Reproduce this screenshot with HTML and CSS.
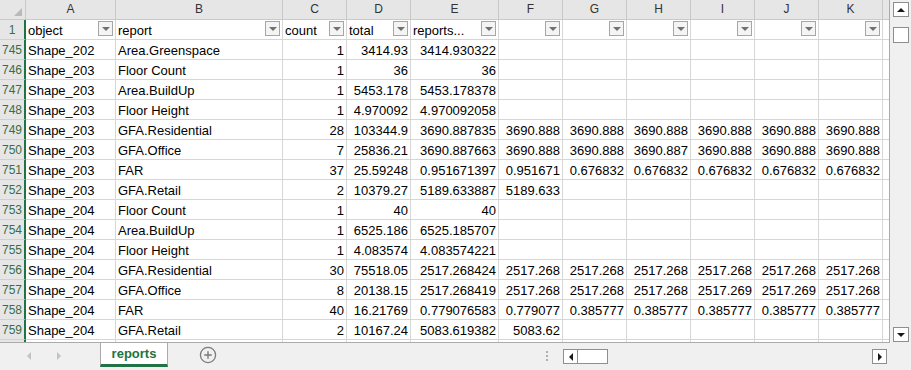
FILE: index.html
```html
<!DOCTYPE html>
<html>
<head>
<meta charset="utf-8">
<link rel="stylesheet" href="styles.css">
</head>
<body>
<div class="app">
  <div class="top">
    <div class="sheet">
      <div class="grid">
        <div class="corner"><span class="tri"></span></div>
        <div class="ch">A</div><div class="ch">B</div><div class="ch">C</div><div class="ch">D</div><div class="ch">E</div><div class="ch">F</div><div class="ch">G</div><div class="ch">H</div><div class="ch">I</div><div class="ch">J</div><div class="ch">K</div><div class="ch">L</div>

        <div class="rh">1</div>
        <div class="c hd"><span class="lbl">object</span><span class="fb"></span></div>
        <div class="c hd"><span class="lbl">report</span><span class="fb"></span></div>
        <div class="c hd"><span class="lbl">count</span><span class="fb"></span></div>
        <div class="c hd"><span class="lbl">total</span><span class="fb"></span></div>
        <div class="c hd"><span class="lbl">reports...</span><span class="fb"></span></div>
        <div class="c hd"><span class="lbl"></span><span class="fb"></span></div>
        <div class="c hd"><span class="lbl"></span><span class="fb"></span></div>
        <div class="c hd"><span class="lbl"></span><span class="fb"></span></div>
        <div class="c hd"><span class="lbl"></span><span class="fb"></span></div>
        <div class="c hd"><span class="lbl"></span><span class="fb"></span></div>
        <div class="c hd"><span class="lbl"></span><span class="fb"></span></div>
        <div class="c"></div>

        <div class="rh">745</div><div class="c">Shape_202</div><div class="c">Area.Greenspace</div><div class="c n">1</div><div class="c n">3414.93</div><div class="c n">3414.930322</div><div class="c n"></div><div class="c n"></div><div class="c n"></div><div class="c n"></div><div class="c n"></div><div class="c n"></div><div class="c"></div>
        <div class="rh">746</div><div class="c">Shape_203</div><div class="c">Floor Count</div><div class="c n">1</div><div class="c n">36</div><div class="c n">36</div><div class="c n"></div><div class="c n"></div><div class="c n"></div><div class="c n"></div><div class="c n"></div><div class="c n"></div><div class="c"></div>
        <div class="rh">747</div><div class="c">Shape_203</div><div class="c">Area.BuildUp</div><div class="c n">1</div><div class="c n">5453.178</div><div class="c n">5453.178378</div><div class="c n"></div><div class="c n"></div><div class="c n"></div><div class="c n"></div><div class="c n"></div><div class="c n"></div><div class="c"></div>
        <div class="rh">748</div><div class="c">Shape_203</div><div class="c">Floor Height</div><div class="c n">1</div><div class="c n">4.970092</div><div class="c n">4.970092058</div><div class="c n"></div><div class="c n"></div><div class="c n"></div><div class="c n"></div><div class="c n"></div><div class="c n"></div><div class="c"></div>
        <div class="rh">749</div><div class="c">Shape_203</div><div class="c">GFA.Residential</div><div class="c n">28</div><div class="c n">103344.9</div><div class="c n">3690.887835</div><div class="c n">3690.888</div><div class="c n">3690.888</div><div class="c n">3690.888</div><div class="c n">3690.888</div><div class="c n">3690.888</div><div class="c n">3690.888</div><div class="c"></div>
        <div class="rh">750</div><div class="c">Shape_203</div><div class="c">GFA.Office</div><div class="c n">7</div><div class="c n">25836.21</div><div class="c n">3690.887663</div><div class="c n">3690.888</div><div class="c n">3690.888</div><div class="c n">3690.887</div><div class="c n">3690.888</div><div class="c n">3690.888</div><div class="c n">3690.888</div><div class="c"></div>
        <div class="rh">751</div><div class="c">Shape_203</div><div class="c">FAR</div><div class="c n">37</div><div class="c n">25.59248</div><div class="c n">0.951671397</div><div class="c n">0.951671</div><div class="c n">0.676832</div><div class="c n">0.676832</div><div class="c n">0.676832</div><div class="c n">0.676832</div><div class="c n">0.676832</div><div class="c"></div>
        <div class="rh">752</div><div class="c">Shape_203</div><div class="c">GFA.Retail</div><div class="c n">2</div><div class="c n">10379.27</div><div class="c n">5189.633887</div><div class="c n">5189.633</div><div class="c n"></div><div class="c n"></div><div class="c n"></div><div class="c n"></div><div class="c n"></div><div class="c"></div>
        <div class="rh">753</div><div class="c">Shape_204</div><div class="c">Floor Count</div><div class="c n">1</div><div class="c n">40</div><div class="c n">40</div><div class="c n"></div><div class="c n"></div><div class="c n"></div><div class="c n"></div><div class="c n"></div><div class="c n"></div><div class="c"></div>
        <div class="rh">754</div><div class="c">Shape_204</div><div class="c">Area.BuildUp</div><div class="c n">1</div><div class="c n">6525.186</div><div class="c n">6525.185707</div><div class="c n"></div><div class="c n"></div><div class="c n"></div><div class="c n"></div><div class="c n"></div><div class="c n"></div><div class="c"></div>
        <div class="rh">755</div><div class="c">Shape_204</div><div class="c">Floor Height</div><div class="c n">1</div><div class="c n">4.083574</div><div class="c n">4.083574221</div><div class="c n"></div><div class="c n"></div><div class="c n"></div><div class="c n"></div><div class="c n"></div><div class="c n"></div><div class="c"></div>
        <div class="rh">756</div><div class="c">Shape_204</div><div class="c">GFA.Residential</div><div class="c n">30</div><div class="c n">75518.05</div><div class="c n">2517.268424</div><div class="c n">2517.268</div><div class="c n">2517.268</div><div class="c n">2517.268</div><div class="c n">2517.268</div><div class="c n">2517.268</div><div class="c n">2517.268</div><div class="c"></div>
        <div class="rh">757</div><div class="c">Shape_204</div><div class="c">GFA.Office</div><div class="c n">8</div><div class="c n">20138.15</div><div class="c n">2517.268419</div><div class="c n">2517.268</div><div class="c n">2517.268</div><div class="c n">2517.268</div><div class="c n">2517.269</div><div class="c n">2517.269</div><div class="c n">2517.268</div><div class="c"></div>
        <div class="rh">758</div><div class="c">Shape_204</div><div class="c">FAR</div><div class="c n">40</div><div class="c n">16.21769</div><div class="c n">0.779076583</div><div class="c n">0.779077</div><div class="c n">0.385777</div><div class="c n">0.385777</div><div class="c n">0.385777</div><div class="c n">0.385777</div><div class="c n">0.385777</div><div class="c"></div>
        <div class="rh">759</div><div class="c">Shape_204</div><div class="c">GFA.Retail</div><div class="c n">2</div><div class="c n">10167.24</div><div class="c n">5083.619382</div><div class="c n">5083.62</div><div class="c n"></div><div class="c n"></div><div class="c n"></div><div class="c n"></div><div class="c n"></div><div class="c"></div>
        <div class="rh">760</div><div class="c"></div><div class="c"></div><div class="c"></div><div class="c"></div><div class="c"></div><div class="c"></div><div class="c"></div><div class="c"></div><div class="c"></div><div class="c"></div><div class="c"></div><div class="c"></div>
      </div>
    </div>
    <div class="vscroll">
      <div class="sbtn"><span class="arr up"></span></div>
      <div class="vthumb"></div>
      <div class="vtrack"></div>
      <div class="sbtn"><span class="arr down"></span></div>
    </div>
  </div>
  <div class="tabbar">
    <div class="nav">
      <span class="navarr left"></span>
      <span class="navarr right"></span>
    </div>
    <div class="tab">reports</div>
    <div class="add">
      <svg width="18" height="18" viewBox="0 0 18 18">
        <circle cx="9" cy="9" r="7.6" fill="none" stroke="#7a7a7a" stroke-width="1.3"/>
        <path d="M9 5.2v7.6M5.2 9h7.6" stroke="#7a7a7a" stroke-width="1.4"/>
      </svg>
    </div>
    <div class="dots"><span></span><span></span><span></span></div>
    <div class="hscroll">
      <div class="sbtn h"><span class="arr left"></span></div>
      <div class="hthumb"></div>
      <div class="htrack"></div>
      <div class="sbtn h"><span class="arr right"></span></div>
    </div>
  </div>
</div>
</body>
</html>
```

FILE: styles.css
```css
* { box-sizing: border-box; }
html, body { margin: 0; padding: 0; }
body {
  width: 911px;
  height: 370px;
  overflow: hidden;
  background: #f0f0f0;
  font-family: "Liberation Sans", Arial, sans-serif;
}
.app { display: flex; flex-direction: column; width: 911px; height: 370px; }
.top { display: flex; height: 343px; }
.sheet {
  width: 889px;
  height: 343px;
  overflow: hidden;
  border-bottom: 1px solid #ababab;
  background: #fff;
}
.grid {
  display: grid;
  grid-template-columns: 26px 90px 167px 64px 64px 88px 64px 64px 64px 64px 64px 64px 64px;
  grid-auto-rows: 20px;
  width: max-content;
}
.corner {
  position: relative;
  background: #e6e6e6;
  border-right: 1px solid #c9c9c9;
  border-bottom: 1px solid #c9c9c9;
}
.corner .tri {
  position: absolute;
  right: 3px;
  bottom: 3px;
  width: 0; height: 0;
  border-left: 8px solid transparent;
  border-bottom: 8px solid #b9b9b9;
}
.ch {
  background: #e6e6e6;
  border-right: 1px solid #c9c9c9;
  border-bottom: 1px solid #c9c9c9;
  text-align: center;
  font-size: 12px;
  line-height: 19px;
  color: #333;
}
.rh {
  background: #e6e6e6;
  border-right: 2px solid #217346;
  border-bottom: 1px solid #d0d0d0;
  text-align: center;
  font-size: 12px;
  line-height: 20px;
  color: #3a6e46;
  overflow: hidden;
}
.c {
  border-right: 1px solid #d6d6d6;
  border-bottom: 1px solid #d6d6d6;
  font-size: 13px;
  line-height: 21px;
  padding-left: 2px;
  color: #000;
  white-space: nowrap;
  overflow: hidden;
}
.c.n { text-align: right; padding-left: 0; padding-right: 2px; }
.c.hd {
  display: flex;
  align-items: flex-start;
  padding-right: 2px;
}
.c.hd .lbl { flex: 1; overflow: hidden; }
.fb {
  flex: none;
  width: 15px;
  height: 15px;
  margin-top: 1px;
  border: 1px solid #a6a6a6;
  background: #f4f4f4;
  display: flex;
  align-items: center;
  justify-content: center;
}
.fb::after {
  content: "";
  width: 0; height: 0;
  border-left: 4px solid transparent;
  border-right: 4px solid transparent;
  border-top: 4px solid #707070;
}
.vscroll {
  width: 22px;
  height: 343px;
  border-left: 1px solid #ababab;
  background: #f0f0f0;
  display: flex;
  flex-direction: column;
  padding: 2px 2px 1px 3px;
}
.sbtn {
  width: 16px;
  height: 15px;
  flex: none;
  background: #fff;
  border: 1px solid #8e8e8e;
  display: flex;
  align-items: center;
  justify-content: center;
}
.vthumb {
  width: 16px;
  height: 16px;
  margin-top: 10px;
  flex: none;
  background: #fff;
  border: 1px solid #8e8e8e;
}
.vtrack { flex: 1; }
.arr { width: 0; height: 0; }
.arr.up { border-left: 4px solid transparent; border-right: 4px solid transparent; border-bottom: 4px solid #1a1a1a; }
.arr.down { border-left: 4px solid transparent; border-right: 4px solid transparent; border-top: 4px solid #1a1a1a; }
.arr.left { border-top: 4px solid transparent; border-bottom: 4px solid transparent; border-right: 4px solid #1a1a1a; }
.arr.right { border-top: 4px solid transparent; border-bottom: 4px solid transparent; border-left: 4px solid #1a1a1a; }
.tabbar {
  display: flex;
  height: 27px;
  background: #f0f0f0;
}
.nav {
  width: 100px;
  display: flex;
  align-items: center;
  padding-left: 27px;
  padding-bottom: 2px;
}
.navarr { width: 0; height: 0; }
.navarr.left { border-top: 4px solid transparent; border-bottom: 4px solid transparent; border-right: 4px solid #c3c3c3; }
.navarr.right { margin-left: 26px; border-top: 4px solid transparent; border-bottom: 4px solid transparent; border-left: 4px solid #c3c3c3; }
.tab {
  width: 68px;
  height: 24px;
  background: #fff;
  border-left: 1px solid #ababab;
  border-right: 1px solid #ababab;
  border-bottom: 3px solid #217346;
  color: #217346;
  font-weight: bold;
  font-size: 13px;
  text-align: center;
  line-height: 22px;
}
.add {
  width: 50px;
  padding-left: 31px;
  padding-top: 3px;
}
.add svg { display: block; }
.dots {
  width: 330px;
  display: flex;
  flex-direction: column;
  align-items: flex-end;
  padding-top: 8px;
  padding-right: 0;
  gap: 2px;
  margin-left: 0;
}
.dots span { width: 2px; height: 2px; background: #b0b0b0; }
.hscroll {
  display: flex;
  width: 324px;
  margin-left: 15px;
  padding-top: 6px;
  height: 21px;
}
.sbtn.h { width: 15px; height: 15px; }
.hthumb {
  width: 30px;
  height: 15px;
  background: #fff;
  border: 1px solid #8e8e8e;
  border-left: none;
  flex: none;
}
.htrack { flex: 1; }
```
